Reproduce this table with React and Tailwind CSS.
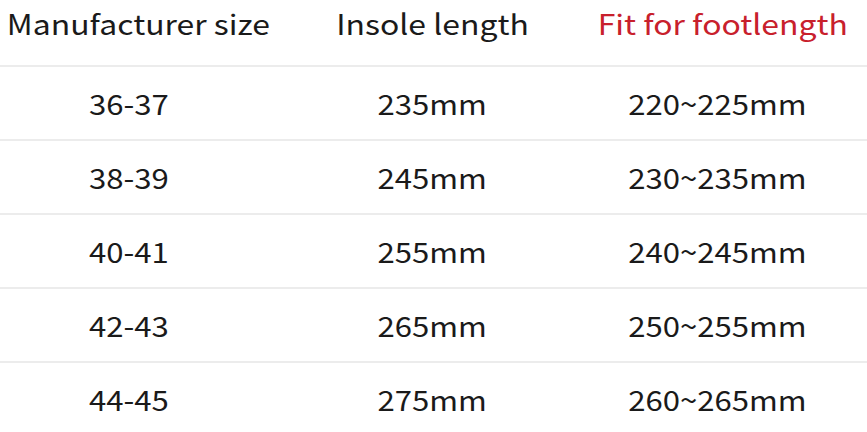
import React from "react";

const rows = [
  ["36-37", "235mm", "220~225mm"],
  ["38-39", "245mm", "230~235mm"],
  ["40-41", "255mm", "240~245mm"],
  ["42-43", "265mm", "250~255mm"],
  ["44-45", "275mm", "260~265mm"],
];

export default function App() {
  return (
    <div
      className="w-[867px] h-[432px] overflow-hidden bg-white text-[#1a1a1a]"
      style={{ fontFamily: '"Noto Sans CJK SC", "Noto Sans", sans-serif' }}
    >
      <div className="grid grid-cols-[276px_312px_270px] h-[65px] items-center text-[28px] leading-none pb-[19px]">
        <div className="text-center"><span className="inline-block scale-x-[1.14]">Manufacturer size</span></div>
        <div className="text-center"><span className="inline-block scale-x-[1.14]">Insole length</span></div>
        <div className="text-center text-[#c8202c]"><span className="inline-block scale-x-[1.14]">Fit for footlength</span></div>
      </div>
      {rows.map((r, i) => (
        <div
          key={i}
          className="grid grid-cols-[258px_348px_222px] h-[74px] items-center border-t-2 border-[#ececec] text-[28px] leading-none"
        >
          {r.map((c, j) => (
            <div key={j} className="text-center">
              <span className="inline-block scale-x-[1.11]">{c}</span>
            </div>
          ))}
        </div>
      ))}
    </div>
  );
}
